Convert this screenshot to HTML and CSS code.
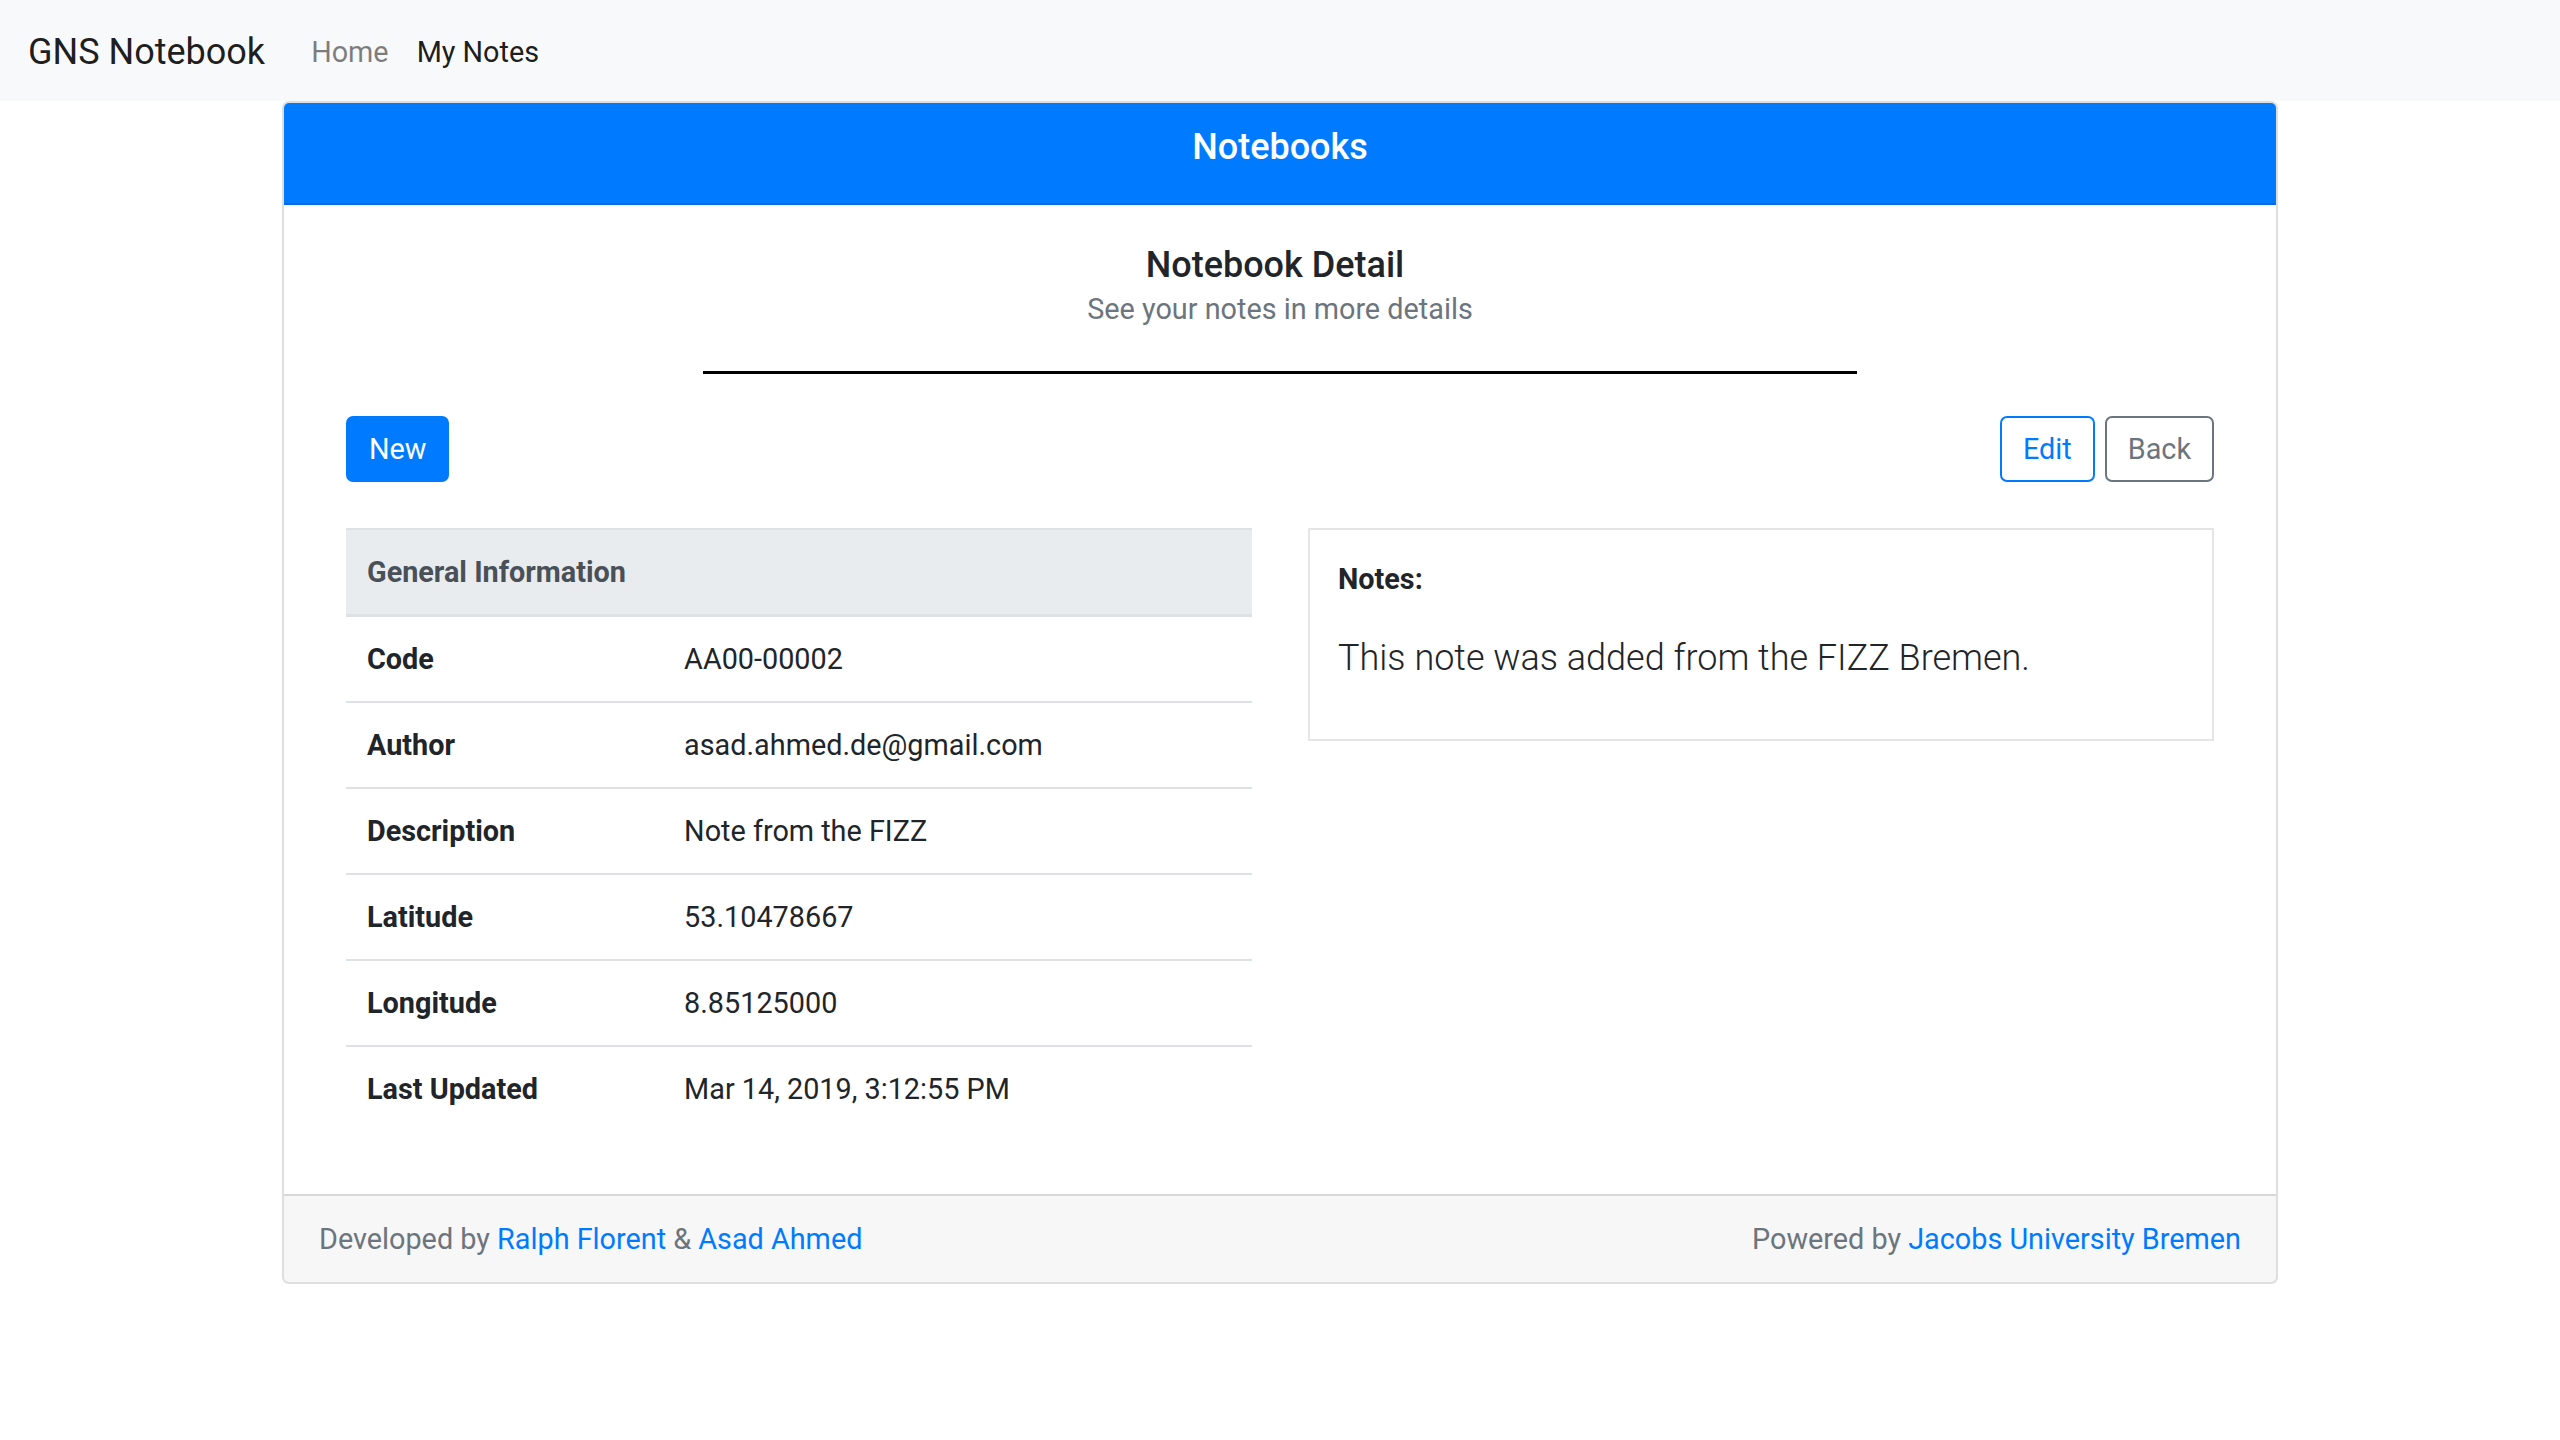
FILE: index.html
```
<!DOCTYPE html>
<html lang="en">
<head>
<meta charset="utf-8">
<title>GNS Notebook</title>
<link rel="stylesheet" href="styles.css">
</head>
<body>
<nav class="navbar">
  <a class="brand" href="#">GNS Notebook</a>
  <a class="nav-link" href="#">Home</a>
  <a class="nav-link active" href="#">My Notes</a>
</nav>
<main class="card">
  <div class="card-header"><h5 class="header-title">Notebooks</h5></div>
  <div class="card-body">
    <div class="intro">
      <h5 class="detail-title">Notebook Detail</h5>
      <p class="detail-sub">See your notes in more details</p>
    </div>
    <hr class="divider">
    <div class="inner">
      <div class="actions">
        <a class="btn btn-primary" href="#">New</a>
        <div class="actions-right">
          <a class="btn btn-outline-primary" href="#">Edit</a>
          <a class="btn btn-outline-secondary" href="#">Back</a>
        </div>
      </div>
      <div class="columns">
        <table class="info-table">
          <thead>
            <tr><th colspan="2">General Information</th></tr>
          </thead>
          <tbody>
            <tr><td class="label">Code</td><td>AA00-00002</td></tr>
            <tr><td class="label">Author</td><td>asad.ahmed.de@gmail.com</td></tr>
            <tr><td class="label">Description</td><td>Note from the FIZZ</td></tr>
            <tr><td class="label">Latitude</td><td>53.10478667</td></tr>
            <tr><td class="label">Longitude</td><td>8.85125000</td></tr>
            <tr><td class="label">Last Updated</td><td>Mar 14, 2019, 3:12:55 PM</td></tr>
          </tbody>
        </table>
        <div class="notes-col">
          <div class="notes-card">
            <p class="notes-label">Notes:</p>
            <p class="lead">This note was added from the FIZZ Bremen.</p>
          </div>
        </div>
      </div>
    </div>
  </div>
  <div class="card-footer">
    <span>Developed by <a href="#">Ralph Florent</a> &amp; <a href="#">Asad Ahmed</a></span>
    <span>Powered by <a href="#">Jacobs University Bremen</a></span>
  </div>
</main>
</body>
</html>
```
FILE: styles.css
```
* { box-sizing: border-box; }

html, body {
  margin: 0;
  padding: 0;
  background: #fff;
}

body {
  font-family: Roboto, "Liberation Sans", Arial, sans-serif;
  font-size: 28.8px;
  line-height: 42px;
  color: #212529;
}

a { text-decoration: none; }

.navbar {
  height: 101px;
  background: #f8f9fa;
  display: flex;
  align-items: center;
  padding: 2px 28px 0;
}

.brand {
  font-size: 36px;
  line-height: 52px;
  color: rgba(0, 0, 0, 0.9);
  margin-right: 32px;
}

.nav-link {
  padding: 0 14px;
  color: rgba(0, 0, 0, 0.5);
  font-size: 28.8px;
}

.nav-link.active { color: rgba(0, 0, 0, 0.9); }

.card {
  display: block;
  width: 1996px;
  margin: 0 auto;
  border: 2px solid rgba(0, 0, 0, 0.125);
  border-radius: 7px;
  background: #fff;
  overflow: hidden;
}

.card-header {
  background: #007bff;
  color: #fff;
  padding: 23px 35px 21px;
  border-bottom: 2px solid rgba(0, 0, 0, 0.125);
  text-align: center;
}

.header-title {
  margin: 0 0 14px;
  font-size: 36px;
  line-height: 42px;
  font-weight: 500;
}

.card-body {
  padding: 35px;
}

.intro { text-align: center; }

.detail-title {
  margin: 4px 0 0;
  padding-right: 10px;
  font-size: 36px;
  line-height: 42px;
  font-weight: 500;
  color: #212529;
}

.detail-sub {
  margin: 2px 0 0;
  color: #6c757d;
  font-size: 28.8px;
  line-height: 42px;
}

.divider {
  width: 60%;
  height: 0;
  border: 0;
  border-top: 3px solid #000;
  margin: 41px auto 42px;
}

.inner { padding: 0 27px; }

.actions {
  display: flex;
  justify-content: space-between;
  align-items: center;
  margin-bottom: 46px;
}

.actions-right {
  display: flex;
  gap: 10px;
}

.btn {
  display: inline-block;
  font-size: 28.8px;
  line-height: 42px;
  padding: 10px 21px;
  border: 2px solid transparent;
  border-radius: 7px;
  text-align: center;
}

.btn-primary {
  background: #007bff;
  border-color: #007bff;
  color: #fff;
}

.btn-outline-primary {
  color: #007bff;
  border-color: #007bff;
  background: #fff;
}

.btn-outline-secondary {
  color: #6c757d;
  border-color: #6c757d;
  background: #fff;
}

.columns {
  display: grid;
  grid-template-columns: 1fr 1fr;
  column-gap: 56px;
  align-items: start;
}

.info-table {
  width: 100%;
  border-collapse: collapse;
  margin-bottom: 28px;
}

.info-table th {
  text-align: left;
  background: #e9ecef;
  color: #495057;
  font-weight: 700;
  padding: 21px;
  border-top: 2px solid #dee2e6;
  border-bottom: 3px solid #dee2e6;
}

.info-table td {
  padding: 21px;
  line-height: 42px;
  border-top: 2px solid #dee2e6;
  vertical-align: top;
}

.info-table tbody tr:first-child td { border-top: 0; }

.info-table td.label {
  width: 35%;
  font-weight: 700;
}

.notes-card {
  border: 2px solid rgba(0, 0, 0, 0.1);
  padding: 28px 28px 28px;
}

.notes-label {
  margin: 0 0 32px;
  font-weight: 700;
}

.lead {
  margin: 0 0 27px;
  font-size: 36px;
  line-height: 52px;
  font-weight: 300;
}

.card-footer {
  display: flex;
  justify-content: space-between;
  padding: 22px 35px;
  background: rgba(0, 0, 0, 0.03);
  border-top: 2px solid rgba(0, 0, 0, 0.125);
  color: #6c757d;
}

.card-footer a { color: #007bff; }
```
